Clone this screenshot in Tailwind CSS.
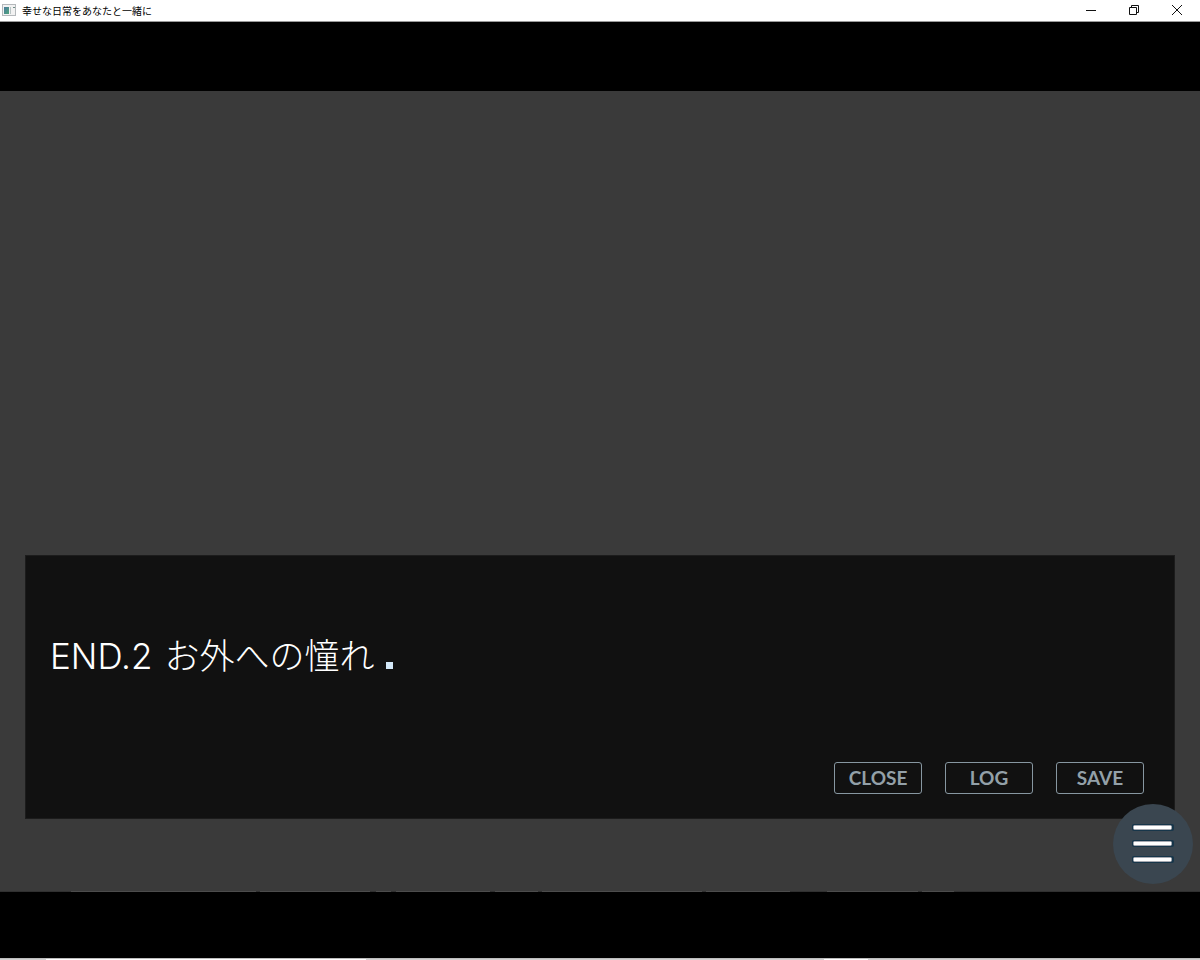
<!DOCTYPE html>
<html lang="ja">
<head>
    <meta charset="UTF-8">
    <meta name="viewport" content="width=device-width, initial-scale=1.0">
    <title>幸せな日常をあなたと一緒に</title>
    <script src="https://cdn.jsdelivr.net/npm/@tailwindcss/browser@4"></script>
</head>
<body class="min-h-screen flex flex-col bg-black font-['Noto_Sans_CJK_JP',sans-serif]">

    <!-- Title bar -->
    <header class="h-[22px] flex items-center justify-between bg-white border-b border-[#9a9a9a] text-black">
        <div class="flex items-center gap-1.5 pl-0.5">
            <svg class="w-3.5 h-3.5" viewBox="0 0 14 14" aria-hidden="true">
                <rect x="0.5" y="0.5" width="13" height="11" fill="#f2f2f2" stroke="#b4b8bb"/>
                <defs>
                    <linearGradient id="app-icon" x1="0" y1="0" x2="1" y2="1">
                        <stop offset="0" stop-color="#4b7a9c"/>
                        <stop offset="1" stop-color="#4fa57c"/>
                    </linearGradient>
                </defs>
                <rect x="2" y="3" width="5" height="7" fill="url(#app-icon)"/>
                <rect x="8" y="3" width="1" height="7" fill="#b9c4c4"/>
                <path d="M11 3h2v1h-2z" fill="#6f8d86"/>
            </svg>
            <h1 class="text-[10px] leading-5">幸せな日常をあなたと一緒に</h1>
        </div>
        <div class="flex h-full pr-0.5 pb-0.5">
            <button type="button" aria-label="最小化" class="w-[43px] flex items-center justify-center">
                <svg class="w-3 h-3" viewBox="0 0 12 12" fill="none" stroke="#111"><path d="M1 6.5h10"/></svg>
            </button>
            <button type="button" aria-label="元に戻す" class="w-[43px] flex items-center justify-center">
                <svg class="w-3 h-3" viewBox="0 0 12 12" fill="none" stroke="#111">
                    <path d="M1.5 3.5h7v7h-7zM3.5 3.5v-2h7v7h-2"/>
                </svg>
            </button>
            <button type="button" aria-label="閉じる" class="w-[43px] flex items-center justify-center">
                <svg class="w-3 h-3" viewBox="0 0 12 12" fill="none" stroke="#111"><path d="M1 1l10 10M11 1L1 11"/></svg>
            </button>
        </div>
    </header>

    <!-- Game screen -->
    <main class="flex-1 flex flex-col justify-center pt-[3px]">
        <div class="relative w-full aspect-[400/267] flex flex-col justify-end bg-[#3a3a3a] px-[25px] pb-[73px]">

            <!-- Message window -->
            <section class="min-h-[264px] flex flex-col justify-between bg-[#111111] border border-[#1c1c1c] pt-[70px] pb-6 pl-6 pr-[30px]">
                <p class="flex items-baseline gap-3 text-[35px] leading-[56px] text-white font-light">
                    <span class="font-['Inter',sans-serif]">END.2</span>
                    <span>お外への憧れ</span>
                    <span class="w-[7px] h-[7px] bg-[#d3e8f8]"></span>
                </p>
                <nav class="flex justify-end gap-[23px] font-['Lato',sans-serif] font-bold text-[19px] text-[#93a0a8]">
                    <button type="button" class="w-[88px] h-8 flex items-center justify-center border border-[#8797a1] rounded-[3px]">CLOSE</button>
                    <button type="button" class="w-[88px] h-8 flex items-center justify-center border border-[#8797a1] rounded-[3px]">LOG</button>
                    <button type="button" class="w-[88px] h-8 flex items-center justify-center border border-[#8797a1] rounded-[3px]">SAVE</button>
                </nav>
            </section>

            <!-- Menu button -->
            <button type="button" aria-label="メニュー" class="absolute right-[7px] bottom-2 w-20 h-20 rounded-full bg-[#3a4650]">
                <svg class="w-20 h-20" viewBox="0 0 80 80" aria-hidden="true">
                    <g fill="#17364a">
                        <rect x="19" y="20" width="42" height="7" rx="2"/>
                        <rect x="19" y="36" width="42" height="7" rx="2"/>
                        <rect x="19" y="52" width="42" height="7" rx="2"/>
                    </g>
                    <g fill="#ffffff" stroke="#b9b3b8" stroke-width="0.6">
                        <rect x="20.5" y="21.5" width="38" height="4" rx="1"/>
                        <rect x="20.5" y="37.5" width="38" height="4" rx="1"/>
                        <rect x="20.5" y="53.5" width="38" height="4" rx="1"/>
                    </g>
                </svg>
            </button>

            <!-- Bottom edge of the scene -->
            <svg class="absolute left-0 bottom-0 w-full h-px" viewBox="0 0 1200 1" preserveAspectRatio="none" aria-hidden="true">
                <rect width="1200" height="1" fill="#303030"/>
                <path d="M71 .5H256M260 .5H370M376 .5H391M396 .5H490M495 .5H538M542 .5H702M706 .5H790M827 .5H918M922 .5H954" stroke="#4c4c4c"/>
            </svg>
        </div>
    </main>

    <!-- Window edge -->
    <footer class="h-0.5 flex bg-[#d2d2d2] border-t border-[#bdbdbd]">
        <div class="w-[46px]"></div>
        <div class="w-[320px] bg-white"></div>
        <div class="w-[458px]"></div>
        <div class="w-[44px] bg-white"></div>
    </footer>

</body>
</html>
